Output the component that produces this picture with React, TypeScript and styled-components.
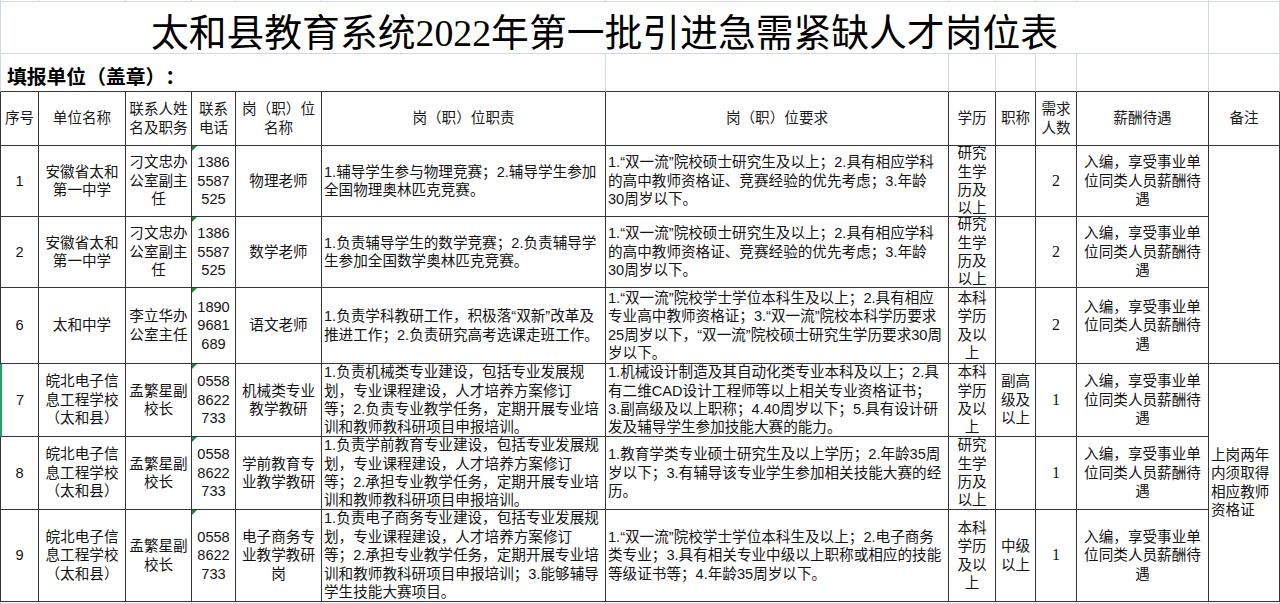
import React from 'react';
import styled, { createGlobalStyle, css } from 'styled-components';

const GlobalStyle = createGlobalStyle`
  html, body {
    margin: 0;
    padding: 0;
    background: #fff;
  }
  body {
    width: 1280px;
    height: 604px;
    overflow: hidden;
    font-family: "Liberation Sans", "Noto Sans CJK SC", sans-serif;
    color: #141414;
    text-spacing-trim: space-all;
  }
`;

const GRID = '#d0d7e5';
const INK = '#363636';
const COLS = [39, 87, 66, 44, 86, 284, 343, 47, 40, 41, 132, 71];
const ROWS = [2, 52, 38, 54, 71, 71, 76, 73, 73, 92, 2];

const Sheet = styled.div`
  display: grid;
  grid-template-columns: ${COLS.map((c) => `${c}px`).join(' ')};
  grid-template-rows: ${ROWS.map((r) => `${r}px`).join(' ')};
  width: 1280px;
  height: 604px;
`;

type CellProps = {
  $span?: number;
  $rows?: number;
  $align?: 'left' | 'center';
  $light?: boolean;
  $first?: boolean;
  $selected?: boolean;
};

const Cell = styled.div<CellProps>`
  box-sizing: border-box;
  position: relative;
  display: flex;
  flex-direction: column;
  justify-content: center;
  align-items: ${({ $align }) => ($align === 'left' ? 'flex-start' : 'center')};
  text-align: ${({ $align }) => ($align === 'left' ? 'left' : 'center')};
  padding: 0 ${({ $align }) => ($align === 'left' ? '0 0 2px' : '0')};
  grid-column: span ${({ $span }) => $span || 1};
  grid-row: span ${({ $rows }) => $rows || 1};
  border-right: 1px solid ${({ $light }) => ($light ? GRID : INK)};
  border-bottom: 1px solid ${({ $light }) => ($light ? GRID : INK)};
  ${({ $first, $light }) =>
    $first &&
    css`
      border-left: 1px solid ${$light ? GRID : INK};
    `}
  ${({ $selected }) =>
    $selected &&
    css`
      border-left: 2px solid #1fa463;
    `}
  overflow: hidden;
  font-size: 14.6px;
  line-height: 18.4px;
`;

const Sliver = styled(Cell).attrs({ $light: true })``;

const TitleCell = styled(Cell)`
  border-bottom-color: ${GRID};
  border-right-color: ${GRID};
  padding-top: 10px;
  font-family: "Liberation Serif", "Noto Sans CJK SC", serif;
  font-size: 37.8px;
  font-weight: 400;
  line-height: 44px;
  color: #000;
`;

const FillCell = styled(Cell)`
  justify-content: flex-end;
  align-items: flex-start;
  border-right-color: ${GRID};
  border-left-color: ${GRID};
  padding: 0 0 1px 6px;
  font-size: 19.8px;
  font-weight: 700;
  line-height: 26px;
  color: #000;
`;

const BlankCell = styled(Cell)`
  border-right-color: ${GRID};
`;

const HeadCell = styled(Cell)`
  color: #1a1a1a;
`;

const PhoneCell = styled(Cell)`
  &::before {
    content: '';
    position: absolute;
    top: 0;
    left: 0;
    border-top: 5px solid #1b8a3c;
    border-right: 5px solid transparent;
  }
`;

const CountCell = styled(Cell)`
  font-family: "Liberation Serif", serif;
  font-size: 16px;
`;

const NoteCell = styled(Cell)`
  padding-left: 2px;
`;

const Line = styled.span`
  display: block;
  white-space: nowrap;
`;

const Lines = ({ lines }: { lines: string[] }) => (
  <>
    {lines.map((l, i) => (
      <Line key={i}>{l}</Line>
    ))}
  </>
);

type Row = {
  no: string;
  unit: string[];
  contact: string[];
  phone: string[];
  post: string[];
  duty: string[];
  req: string[];
  edu: string[];
  rank: string[];
  count: string;
};

const pay = ['入编，享受事业单', '位同类人员薪酬待', '遇'];

const rows: Row[] = [
  {
    no: '1',
    unit: ['安徽省太和', '第一中学'],
    contact: ['刁文忠办', '公室副主', '任'],
    phone: ['1386', '5587', '525'],
    post: ['物理老师'],
    duty: ['1.辅导学生参与物理竞赛；2.辅导学生参加', '全国物理奥林匹克竞赛。'],
    req: [
      '1.“双一流”院校硕士研究生及以上；2.具有相应学科',
      '的高中教师资格证、竞赛经验的优先考虑；3.年龄',
      '30周岁以下。',
    ],
    edu: ['研究', '生学', '历及', '以上'],
    rank: [],
    count: '2',
  },
  {
    no: '2',
    unit: ['安徽省太和', '第一中学'],
    contact: ['刁文忠办', '公室副主', '任'],
    phone: ['1386', '5587', '525'],
    post: ['数学老师'],
    duty: ['1.负责辅导学生的数学竞赛；2.负责辅导学', '生参加全国数学奥林匹克竞赛。'],
    req: [
      '1.“双一流”院校硕士研究生及以上；2.具有相应学科',
      '的高中教师资格证、竞赛经验的优先考虑；3.年龄',
      '30周岁以下。',
    ],
    edu: ['研究', '生学', '历及', '以上'],
    rank: [],
    count: '2',
  },
  {
    no: '6',
    unit: ['太和中学'],
    contact: ['李立华办', '公室主任'],
    phone: ['1890', '9681', '689'],
    post: ['语文老师'],
    duty: ['1.负责学科教研工作，积极落“双新”改革及', '推进工作；2.负责研究高考选课走班工作。'],
    req: [
      '1.“双一流”院校学士学位本科生及以上；2.具有相应',
      '专业高中教师资格证；3.“双一流”院校本科学历要求',
      '25周岁以下，“双一流”院校硕士研究生学历要求30周',
      '岁以下。',
    ],
    edu: ['本科', '学历', '及以', '上'],
    rank: [],
    count: '2',
  },
  {
    no: '7',
    unit: ['皖北电子信', '息工程学校', '（太和县）'],
    contact: ['孟繁星副', '校长'],
    phone: ['0558', '8622', '733'],
    post: ['机械类专业', '教学教研'],
    duty: [
      '1.负责机械类专业建设，包括专业发展规',
      '划，专业课程建设，人才培养方案修订',
      '等；2.负责专业教学任务，定期开展专业培',
      '训和教师教科研项目申报培训。',
    ],
    req: [
      '1.机械设计制造及其自动化类专业本科及以上；2.具',
      '有二维CAD设计工程师等以上相关专业资格证书；',
      '3.副高级及以上职称；4.40周岁以下；5.具有设计研',
      '发及辅导学生参加技能大赛的能力。',
    ],
    edu: ['本科', '学历', '及以', '上'],
    rank: ['副高', '级及', '以上'],
    count: '1',
  },
  {
    no: '8',
    unit: ['皖北电子信', '息工程学校', '（太和县）'],
    contact: ['孟繁星副', '校长'],
    phone: ['0558', '8622', '733'],
    post: ['学前教育专', '业教学教研'],
    duty: [
      '1.负责学前教育专业建设，包括专业发展规',
      '划，专业课程建设，人才培养方案修订',
      '等；2.承担专业教学任务，定期开展专业培',
      '训和教师教科研项目申报培训。',
    ],
    req: [
      '1.教育学类专业硕士研究生及以上学历；2.年龄35周',
      '岁以下；3.有辅导该专业学生参加相关技能大赛的经',
      '历。',
    ],
    edu: ['研究', '生学', '历及', '以上'],
    rank: [],
    count: '1',
  },
  {
    no: '9',
    unit: ['皖北电子信', '息工程学校', '（太和县）'],
    contact: ['孟繁星副', '校长'],
    phone: ['0558', '8622', '733'],
    post: ['电子商务专', '业教学教研', '岗'],
    duty: [
      '1.负责电子商务专业建设，包括专业发展规',
      '划，专业课程建设，人才培养方案修订',
      '等；2.承担专业教学任务，定期开展专业培',
      '训和教师教科研项目申报培训；3.能够辅导',
      '学生技能大赛项目。',
    ],
    req: [
      '1.“双一流”院校学士学位本科生及以上；2.电子商务',
      '类专业；3.具有相关专业中级以上职称或相应的技能',
      '等级证书等；4.年龄35周岁以下。',
    ],
    edu: ['本科', '学历', '及以', '上'],
    rank: ['中级', '以上'],
    count: '1',
  },
];

const headers: string[][] = [
  ['序号'],
  ['单位名称'],
  ['联系人姓', '名及职务'],
  ['联系', '电话'],
  ['岗（职）位', '名称'],
  ['岗（职）位职责'],
  ['岗（职）位要求'],
  ['学历'],
  ['职称'],
  ['需求', '人数'],
  ['薪酬待遇'],
  ['备注'],
];

const SliverRow = ({ keyPrefix }: { keyPrefix: string }) => (
  <>
    {COLS.map((_, i) => (
      <Sliver key={`${keyPrefix}${i}`} $first={i === 0} />
    ))}
  </>
);

export default function App() {
  return (
    <>
      <GlobalStyle />
      <Sheet>
        <SliverRow keyPrefix="top" />

        <TitleCell $span={11} $first $light>
          太和县教育系统2022年第一批引进急需紧缺人才岗位表
        </TitleCell>
        <Sliver />

        <FillCell $span={6} $first>
          填报单位（盖章）：
        </FillCell>
        {[0, 1, 2, 3, 4, 5].map((i) => (
          <BlankCell key={`fill${i}`} />
        ))}

        {headers.map((h, i) => (
          <HeadCell key={`h${i}`} $first={i === 0}>
            <Lines lines={h} />
          </HeadCell>
        ))}

        {rows.map((r, idx) => (
          <React.Fragment key={r.no}>
            <Cell $first $selected={r.no === '7'}>
              {r.no}
            </Cell>
            <Cell>
              <Lines lines={r.unit} />
            </Cell>
            <Cell>
              <Lines lines={r.contact} />
            </Cell>
            <PhoneCell>
              <Lines lines={r.phone} />
            </PhoneCell>
            <Cell>
              <Lines lines={r.post} />
            </Cell>
            <Cell $align="left">
              <Lines lines={r.duty} />
            </Cell>
            <Cell $align="left">
              <Lines lines={r.req} />
            </Cell>
            <Cell>
              <Lines lines={r.edu} />
            </Cell>
            <Cell>
              <Lines lines={r.rank} />
            </Cell>
            <CountCell>{r.count}</CountCell>
            <Cell>
              <Lines lines={pay} />
            </Cell>
            {idx === 0 && <NoteCell $rows={3} $align="left" />}
            {idx === 3 && (
              <NoteCell $rows={3} $align="left">
                <Lines lines={['上岗两年', '内须取得', '相应教师', '资格证']} />
              </NoteCell>
            )}
          </React.Fragment>
        ))}

        <SliverRow keyPrefix="bottom" />
      </Sheet>
    </>
  );
}
